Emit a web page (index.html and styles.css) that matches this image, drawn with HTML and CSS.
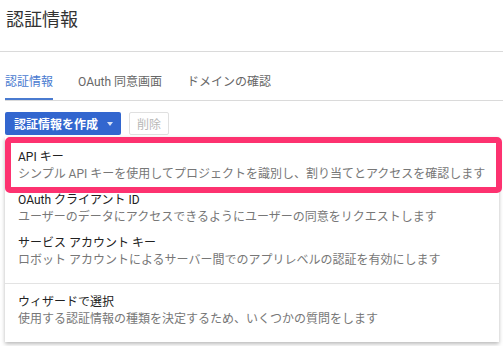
FILE: index.html
```html
<!DOCTYPE html>
<html lang="ja">
<head>
<meta charset="utf-8">
<title>認証情報</title>
<link rel="stylesheet" href="styles.css">
</head>
<body>
<header class="page-header">
  <h1 class="page-title">認証情報</h1>
</header>
<nav class="tabs">
  <a class="tab active">認証情報</a>
  <a class="tab">OAuth 同意画面</a>
  <a class="tab">ドメインの確認</a>
</nav>
<section class="actions">
  <div class="toolbar">
    <div class="btn-primary">認証情報を作成<span class="caret"></span></div>
    <div class="btn-disabled">削除</div>
  </div>
  <div class="menu">
    <div class="menu-item highlight">
      <div class="item-title">API キー</div>
      <div class="item-desc">シンプル API キーを使用してプロジェクトを識別し、割り当てとアクセスを確認します</div>
    </div>
    <div class="menu-item after-highlight">
      <div class="item-title">OAuth クライアント ID</div>
      <div class="item-desc">ユーザーのデータにアクセスできるようにユーザーの同意をリクエストします</div>
    </div>
    <div class="menu-item">
      <div class="item-title">サービス アカウント キー</div>
      <div class="item-desc">ロボット アカウントによるサーバー間でのアプリレベルの認証を有効にします</div>
    </div>
    <div class="menu-divider"></div>
    <div class="menu-item">
      <div class="item-title">ウィザードで選択</div>
      <div class="item-desc">使用する認証情報の種類を決定するため、いくつかの質問をします</div>
    </div>
  </div>
</section>
</body>
</html>
```
FILE: styles.css
```css
* { box-sizing: border-box; }
html, body {
  margin: 0;
  padding: 0;
  background: #fff;
  font-family: "Roboto", "Noto Sans CJK JP", sans-serif;
  color: #212121;
}
.page-header {
  height: 52px;
  padding: 7px 0 0 6px;
  border-bottom: 1px solid #dadada;
}
.page-title {
  margin: 0;
  font-size: 18px;
  line-height: 23px;
  font-weight: 400;
  color: #333;
  font-family: "Noto Sans CJK JP", sans-serif;
}
.tabs {
  display: flex;
  gap: 25px;
  margin-left: 5px;
  border-bottom: 1px solid #dadada;
}
.tab {
  padding: 22px 0 7px;
  font-size: 12px;
  line-height: 17px;
  color: #666;
  border-bottom: 2px solid transparent;
}
.tab.active {
  color: #4a7bd0;
  border-bottom-color: #4a7bd0;
}
.actions {
  position: relative;
  margin: 11px 0 0 5px;
  height: 240px;
}
.toolbar {
  display: flex;
  gap: 8px;
}
.btn-primary {
  display: flex;
  align-items: center;
  gap: 9px;
  height: 23px;
  padding: 0 8px 0 9px;
  border-radius: 2px;
  background: #3266cf;
  color: #fff;
  font-family: "Noto Sans CJK JP", sans-serif;
  font-size: 12px;
  line-height: 23px;
  font-weight: 700;
}
.caret {
  width: 0;
  height: 0;
  border-left: 3.5px solid transparent;
  border-right: 3.5px solid transparent;
  border-top: 4px solid rgba(255,255,255,0.8);
}
.btn-disabled {
  height: 23px;
  padding: 0 7px;
  border: 1px solid #e0e0e0;
  border-radius: 2px;
  background: #fff;
  color: #b8b8b8;
  font-family: "Noto Sans CJK JP", sans-serif;
  font-size: 12px;
  line-height: 21px;
}
.menu {
  position: absolute;
  left: 0;
  top: 25px;
  width: 494px;
  padding-bottom: 10px;
  background: #fff;
  box-shadow: 0 2px 4px rgba(0,0,0,0.28);
  z-index: 5;
}
.menu-item {
  padding: 5px 13px 4px;
  font-size: 12px;
  line-height: 17px;
  white-space: nowrap;
}
.menu-item.highlight {
  margin-right: -3px;
  padding: 6px 7px 4px;
  border: 6px solid #fd3270;
  border-radius: 5px;
}
.menu-item.after-highlight {
  margin-top: -6px;
}
.item-title {
  color: #212121;
}
.item-desc {
  color: #777;
}
.menu-divider {
  height: 1px;
  margin: 10px 0 5px;
  background: #e3e3e3;
}
```
